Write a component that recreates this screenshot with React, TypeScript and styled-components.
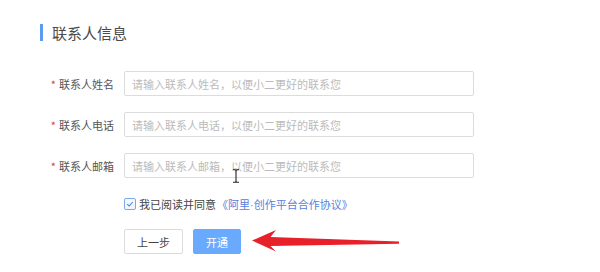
import styled, { createGlobalStyle } from "styled-components";

const GlobalStyle = createGlobalStyle`
  html, body {
    margin: 0;
    padding: 0;
    background: #fff;
  }
  body {
    font-family: "Noto Sans CJK SC", "Noto Sans", "Liberation Sans", sans-serif;
  }
`;

const fields = [
  { label: "联系人姓名", placeholder: "请输入联系人姓名，以便小二更好的联系您" },
  { label: "联系人电话", placeholder: "请输入联系人电话，以便小二更好的联系您" },
  { label: "联系人邮箱", placeholder: "请输入联系人邮箱，以便小二更好的联系您" },
];

const App = () => {
  return (
    <Page>
      <GlobalStyle />
      <SectionTitle>联系人信息</SectionTitle>
      <Form>
        {fields.map(({ label, placeholder }) => (
          <Row key={label}>
            <Label>
              <Star>*</Star>
              {label}
            </Label>
            <Input placeholder={placeholder} />
          </Row>
        ))}
        <AgreeRow>
          <CheckBox>
            <svg width="8" height="8" viewBox="0 0 8 8">
              <path d="M1.2 4.2 L3.2 6 L6.8 2" fill="none" stroke="#4a86e0" strokeWidth="1.1" />
            </svg>
          </CheckBox>
          <AgreeText>我已阅读并同意</AgreeText>
          <Link>
            《阿里<Dot>·</Dot>创作平台合作协议》
          </Link>
        </AgreeRow>
        <Actions>
          <Button>上一步</Button>
          <Button $primary>开通</Button>
        </Actions>
      </Form>

      <Cursor width="8" height="14" viewBox="0 0 8 14">
        <path d="M1 0.7 H3.2 L4 1.5 L4.8 0.7 H7 M4 1.5 V12.5 M1 13.3 H3.2 L4 12.5 L4.8 13.3 H7" fill="none" stroke="#222" strokeWidth="1.1" />
      </Cursor>

      <Arrow width="160" height="30" viewBox="0 0 160 30">
        <path d="M0 13.5 L24 3 L18.5 10 L147 14.6 L147 16.8 L18.5 19 L24 24.5 Z" fill="#e8202a" />
      </Arrow>
    </Page>
  );
};

export default App;

const Page = styled.div`
  position: relative;
  width: 600px;
  height: 272px;
  box-sizing: border-box;
  padding: 24px 0 0 40px;
  overflow: hidden;
`;

const SectionTitle = styled.div`
  border-left: 3px solid #5b9bf0;
  padding-left: 9px;
  height: 17px;
  line-height: 17px;
  font-size: 15px;
  color: #4a4a4a;
`;

const Form = styled.div`
  margin-top: 30px;
  display: flex;
  flex-direction: column;
`;

const Row = styled.div`
  display: flex;
  align-items: center;
  height: 25px;
  margin-bottom: 16px;
`;

const Label = styled.label`
  width: 74px;
  padding-right: 10px;
  text-align: right;
  font-size: 11px;
  color: #555;
  white-space: nowrap;
`;

const Star = styled.span`
  color: #e4393c;
  margin-right: 3px;
`;

const Input = styled.input`
  width: 350px;
  height: 25px;
  box-sizing: border-box;
  border: 1px solid #dcdcdc;
  border-radius: 2px;
  padding: 0 7px;
  font-family: inherit;
  font-size: 11px;
  outline: none;
  &::placeholder {
    color: #bbb;
  }
`;

const AgreeRow = styled.div`
  display: flex;
  align-items: center;
  height: 16px;
  margin: 2px 0 0 84px;
  font-size: 11px;
`;

const CheckBox = styled.span`
  display: flex;
  align-items: center;
  justify-content: center;
  width: 12px;
  height: 12px;
  box-sizing: border-box;
  border: 1px solid #7ea8e6;
  border-radius: 2px;
  background: #f2f7fe;
  margin-right: 3px;
`;

const AgreeText = styled.span`
  color: #444;
`;

const Link = styled.span`
  color: #5b80dc;
  margin-left: 1px;
`;

const Dot = styled.span`
  font-family: "Liberation Sans", sans-serif;
`;

const Actions = styled.div`
  display: flex;
  gap: 10px;
  margin: 17px 0 0 84px;
`;

const Button = styled.button<{ $primary?: boolean }>`
  width: ${(p) => (p.$primary ? "48px" : "59px")};
  height: 25px;
  box-sizing: border-box;
  border-radius: 2px;
  border: 1px solid ${(p) => (p.$primary ? "#69aaff" : "#dcdcdc")};
  background: ${(p) => (p.$primary ? "#69aaff" : "#fff")};
  color: ${(p) => (p.$primary ? "#fff" : "#444")};
  font-family: inherit;
  font-size: 11px;
  padding: 0;
`;

const Cursor = styled.svg`
  position: absolute;
  left: 232px;
  top: 169px;
`;

const Arrow = styled.svg`
  position: absolute;
  left: 252px;
  top: 227px;
`;
